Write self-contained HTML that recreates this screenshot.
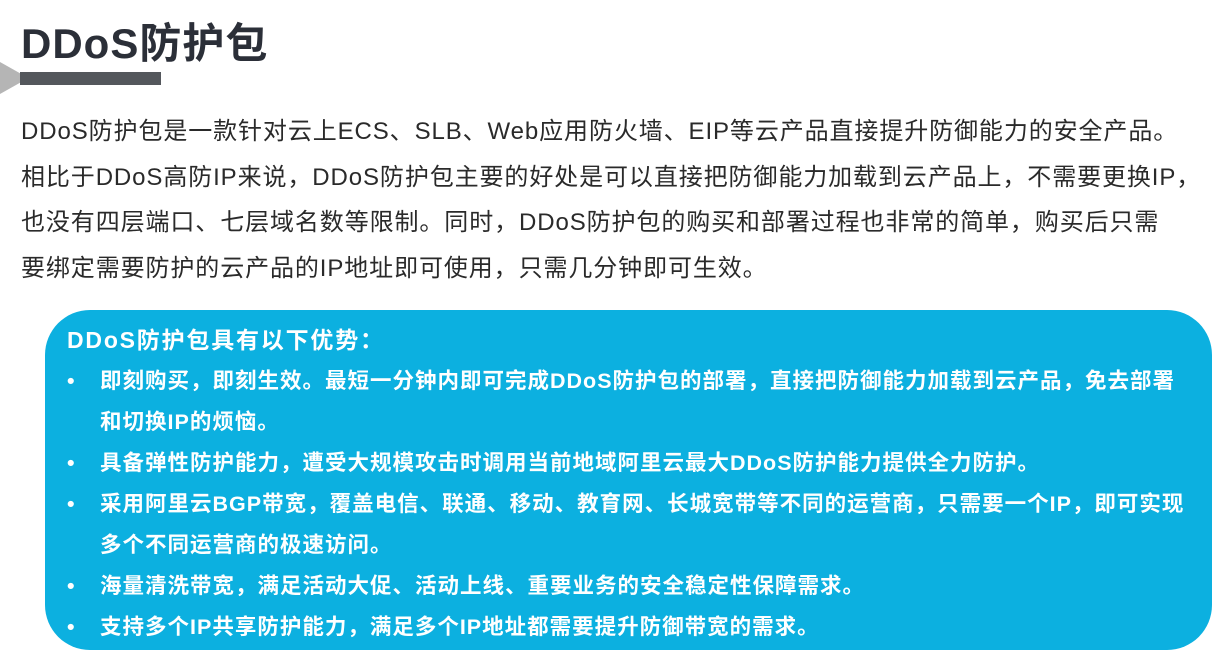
<!DOCTYPE html>
<html><head><meta charset="utf-8"><style>
body{margin:0;width:1232px;height:664px;background:#fff;overflow:hidden;position:relative;font-family:"Liberation Sans","Noto Sans CJK SC",sans-serif;}
.t{position:absolute;left:21px;top:10px;font-size:42px;font-weight:bold;color:#2b2f38;letter-spacing:1px;}
.bar{position:absolute;left:20px;top:72px;width:141px;height:13px;background:#54575c;}
.tri{position:absolute;left:0;top:62px;width:20px;height:32px;background:#b5b5b5;clip-path:polygon(0 0,100% 35%,100% 65%,0 100%);}
.p{position:absolute;left:21px;top:109px;width:1220px;font-size:24px;letter-spacing:0.9px;line-height:45.5px;color:#2a2a2a;white-space:nowrap;}
.box{position:absolute;left:45px;top:310px;width:1167px;height:340px;background:#0cb0e0;border-radius:45px;}
.b{position:absolute;left:67px;top:320px;width:1150px;color:#fff;font-weight:bold;font-size:21.5px;line-height:41px;white-space:nowrap;}
.li{position:relative;padding-left:33px;letter-spacing:1px;}
.li:before{content:"•";position:absolute;left:0;}
.h{letter-spacing:1.8px;font-size:23px;}
</style></head><body>
<div class="tri"></div>
<div class="t">DDoS防护包</div>
<div class="bar"></div>
<div class="p">DDoS防护包是一款针对云上ECS、SLB、Web应用防火墙、EIP等云产品直接提升防御能力的安全产品。<br>相比于DDoS高防IP来说，DDoS防护包主要的好处是可以直接把防御能力加载到云产品上，不需要更换IP，<br>也没有四层端口、七层域名数等限制。同时，DDoS防护包的购买和部署过程也非常的简单，购买后只需<br>要绑定需要防护的云产品的IP地址即可使用，只需几分钟即可生效。</div>
<div class="box"></div>
<div class="b">
<div class="h">DDoS防护包具有以下优势：</div>
<div class="li">即刻购买，即刻生效。最短一分钟内即可完成DDoS防护包的部署，直接把防御能力加载到云产品，免去部署<br>和切换IP的烦恼。</div>
<div class="li">具备弹性防护能力，遭受大规模攻击时调用当前地域阿里云最大DDoS防护能力提供全力防护。</div>
<div class="li">采用阿里云BGP带宽，覆盖电信、联通、移动、教育网、长城宽带等不同的运营商，只需要一个IP，即可实现<br>多个不同运营商的极速访问。</div>
<div class="li">海量清洗带宽，满足活动大促、活动上线、重要业务的安全稳定性保障需求。</div>
<div class="li">支持多个IP共享防护能力，满足多个IP地址都需要提升防御带宽的需求。</div>
</div>
</body></html>
